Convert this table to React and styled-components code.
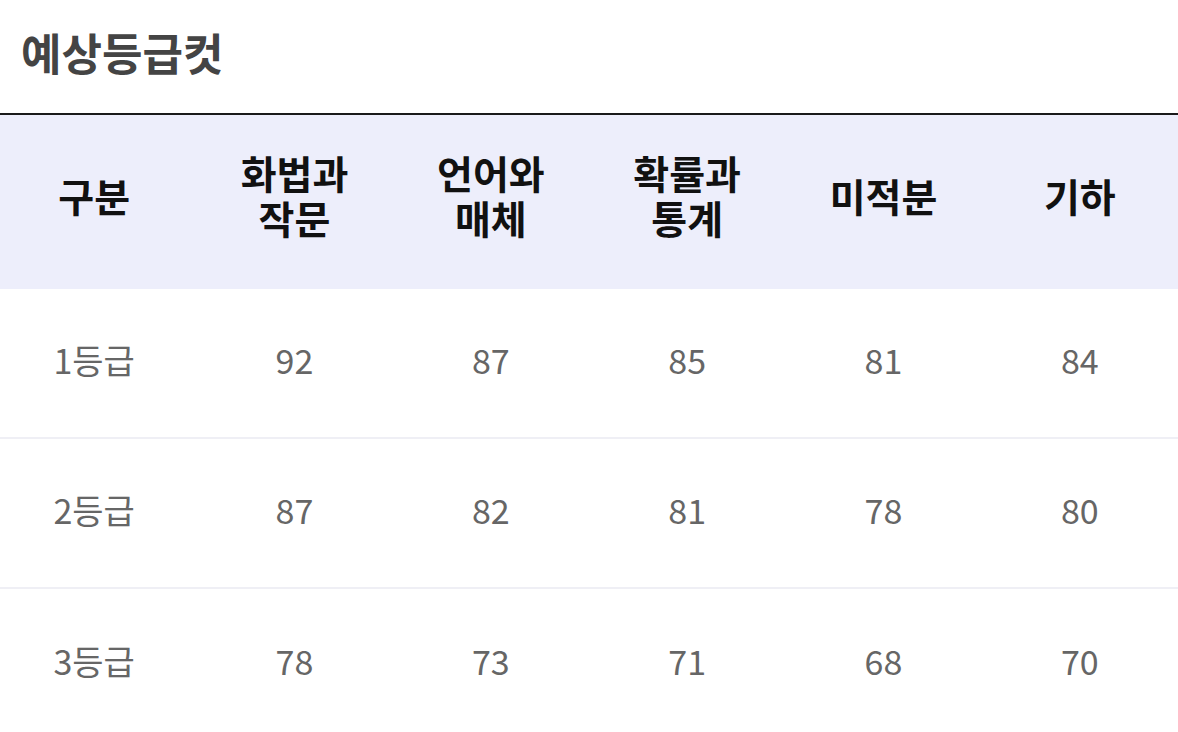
import React from "react";
import styled, { createGlobalStyle } from "styled-components";

const GlobalStyle = createGlobalStyle`
  html, body {
    margin: 0;
    padding: 0;
    background: #ffffff;
  }
  body {
    font-family: "Noto Sans CJK KR", "Noto Sans", sans-serif;
  }
`;

const Page = styled.section`
  width: 1178px;
  overflow: hidden;
`;

const Title = styled.h2`
  margin: 0;
  height: 115px;
  display: flex;
  align-items: center;
  padding-left: 21px;
  padding-bottom: 10px;
  font-size: 44px;
  font-weight: 700;
  color: #444444;
  border-bottom: 2px solid #1a1a1a;
  box-sizing: border-box;
`;

const Table = styled.div`
  display: grid;
  grid-template-columns: repeat(6, 1fr);
`;

const HeadCell = styled.div`
  height: 174px;
  background: #edeefb;
  display: flex;
  align-items: center;
  justify-content: center;
  text-align: center;
  font-size: 39px;
  font-weight: 700;
  line-height: 45px;
  color: #111111;
  box-sizing: border-box;
  padding-bottom: 14px;
  padding-right: ${(p) => (p.first ? "8px" : "0")};
`;

const Cell = styled.div`
  height: 150px;
  display: flex;
  align-items: center;
  justify-content: center;
  font-size: 34px;
  font-weight: 400;
  color: #666666;
  border-bottom: ${(p) => (p.last ? "none" : "2px solid #efeff5")};
  box-sizing: border-box;
  padding-bottom: 8px;
  padding-right: ${(p) => (p.first ? "8px" : "0")};
`;

const heads = [
  ["구분"],
  ["화법과", "작문"],
  ["언어와", "매체"],
  ["확률과", "통계"],
  ["미적분"],
  ["기하"],
];

const rows = [
  ["1등급", 92, 87, 85, 81, 84],
  ["2등급", 87, 82, 81, 78, 80],
  ["3등급", 78, 73, 71, 68, 70],
];

export default () => {
  return (
    <Page>
      <GlobalStyle />
      <Title>예상등급컷</Title>
      <Table>
        {heads.map((lines, i) => (
          <HeadCell key={i} first={i === 0}>
            <div>
              {lines.map((l) => (
                <div key={l}>{l}</div>
              ))}
            </div>
          </HeadCell>
        ))}
        {rows.map((row, r) =>
          row.map((v, c) => (
            <Cell key={`${r}-${c}`} first={c === 0} last={r === rows.length - 1}>
              {v}
            </Cell>
          ))
        )}
      </Table>
    </Page>
  );
};
